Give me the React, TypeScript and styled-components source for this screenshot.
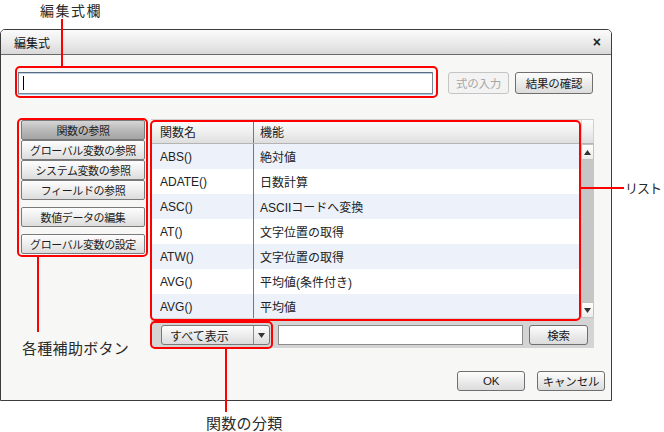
import styled, { createGlobalStyle } from "styled-components";

const GlobalStyle = createGlobalStyle`
  html, body {
    margin: 0;
    padding: 0;
    background: #ffffff;
  }
  body {
    font-family: "Liberation Sans", "Noto Sans CJK JP", sans-serif;
    font-size: 12px;
    color: #222;
  }
`;

const Page = styled.div`
  position: relative;
  width: 664px;
  height: 432px;
  overflow: hidden;
  background: #fff;
`;

const Dialog = styled.div`
  margin-top: 29px;
  width: 612px;
  height: 372px;
  box-sizing: border-box;
  border: 1px solid #3c3c3c;
  border-radius: 5px 5px 0 0;
  background: #f7f8f6;
  display: flex;
  flex-direction: column;
`;

const TitleBar = styled.div`
  height: 24px;
  flex: none;
  display: flex;
  align-items: center;
  justify-content: space-between;
  padding: 0 10px 0 13px;
  border-bottom: 1px solid #6a6a6a;
  border-radius: 4px 4px 0 0;
  background: linear-gradient(#fbfbfb, #e9e9e9 60%, #d9d9d9);
  font-size: 12px;
  color: #111;
`;

const CloseMark = styled.span`
  font-size: 14px;
  font-weight: bold;
  color: #222;
`;

const Body = styled.div`
  flex: 1;
  display: flex;
  flex-direction: column;
  padding: 17px 6px 0 17px;
`;

const ExprRow = styled.div`
  display: flex;
  align-items: center;
  height: 22px;
`;

const ExprInput = styled.div`
  width: 415px;
  height: 22px;
  box-sizing: border-box;
  border: 1px solid #7b8796;
  border-top-color: #5d6b7c;
  box-shadow: inset 0 1px 0 #b9d3ee, 0 1px 0 #a9c6e6;
  background: #fff;
  display: flex;
  align-items: center;
  padding-left: 4px;
`;

const Caret = styled.span`
  width: 1px;
  height: 14px;
  background: #000;
`;

const Button = styled.div<{ $w: number; $disabled?: boolean; $h?: number }>`
  width: ${(p) => p.$w}px;
  height: ${(p) => p.$h ?? 22}px;
  box-sizing: border-box;
  border: 1px solid ${(p) => (p.$disabled ? "#c4c4c4" : "#6f6f6f")};
  border-radius: 3px;
  background: ${(p) =>
    p.$disabled ? "#f3f3f3" : "linear-gradient(#fdfdfd, #ececec 50%, #dcdcdc)"};
  color: ${(p) => (p.$disabled ? "#a6a6a6" : "#1a1a1a")};
  display: flex;
  align-items: center;
  justify-content: center;
  font-size: 11.5px;
  letter-spacing: -0.2px;
  flex: none;
`;

const MainRow = styled.div`
  display: flex;
  margin-top: 25px;
`;

const SideColumn = styled.div`
  width: 124px;
  margin: 1px 0 0 3px;
  display: flex;
  flex-direction: column;
`;

const SideButton = styled.div<{ $active?: boolean; $gap?: number }>`
  height: 20px;
  box-sizing: border-box;
  margin-top: ${(p) => p.$gap ?? 0}px;
  border: 1px solid #7a7a7a;
  border-radius: 2px;
  background: ${(p) =>
    p.$active
      ? "linear-gradient(#d6d6d6, #b9b9b9 50%, #a4a4a4)"
      : "linear-gradient(#fdfdfd, #eeeeee 50%, #dcdcdc)"};
  display: flex;
  align-items: center;
  justify-content: center;
  font-size: 11px;
  letter-spacing: -0.4px;
  white-space: nowrap;
  color: #1e1e1e;
`;

const ListPane = styled.div`
  width: 443px;
  height: 229px;
  margin-left: 6px;
  box-sizing: border-box;
  background: #d4d4d4;
  display: flex;
  flex-direction: column;
  padding-bottom: 3px;
`;

const ListArea = styled.div`
  display: flex;
  height: 199px;
`;

const Table = styled.div`
  width: 430px;
  display: flex;
  flex-direction: column;
  background: #fff;
  overflow: hidden;
`;

const cols = "103px 1fr";

const HeaderRow = styled.div`
  height: 25px;
  flex: none;
  box-sizing: border-box;
  display: grid;
  grid-template-columns: ${cols};
  background: linear-gradient(#fdfdfd, #f0f0f0 50%, #dedede);
  border-bottom: 1px solid #b4b4b4;
  border-top: 1px solid #d0d0d0;
`;

const Cell = styled.div<{ $first?: boolean }>`
  display: flex;
  align-items: center;
  padding-left: ${(p) => (p.$first ? 9 : 6)}px;
  border-right: ${(p) => (p.$first ? "1px solid #777" : "none")};
  white-space: nowrap;
  font-size: 12px;
  color: #222;
`;

const Row = styled.div<{ $alt: boolean }>`
  height: 25px;
  flex: none;
  display: grid;
  grid-template-columns: ${cols};
  background: ${(p) => (p.$alt ? "#edf1f9" : "#ffffff")};
`;

const ScrollBar = styled.div`
  width: 13px;
  display: flex;
  flex-direction: column;
  margin-left: auto;
`;

const ScrollHead = styled.div`
  height: 25px;
  box-sizing: border-box;
  background: linear-gradient(#fdfdfd, #f0f0f0 50%, #dedede);
  border: 1px solid #d0d0d0;
  border-bottom-color: #b4b4b4;
`;

const ScrollArrow = styled.div`
  height: 16px;
  box-sizing: border-box;
  border: 1px solid #c2c2c2;
  background: linear-gradient(#ffffff, #ececec);
  display: flex;
  align-items: center;
  justify-content: center;
`;

const ScrollTrack = styled.div`
  flex: 1;
  background: #c6c6c6;
`;

const ControlRow = styled.div`
  display: flex;
  align-items: center;
  margin-top: 7px;
  padding-left: 10px;
  height: 20px;
`;

const Combo = styled.div`
  width: 109px;
  height: 20px;
  box-sizing: border-box;
  border: 1px solid #777;
  border-radius: 3px;
  background: linear-gradient(#fdfdfd, #ededed 50%, #dcdcdc);
  display: flex;
`;

const ComboText = styled.div`
  flex: 1;
  display: flex;
  align-items: center;
  padding-left: 8px;
  font-size: 12px;
  color: #1e1e1e;
  border-right: 1px solid #8a8a8a;
`;

const ComboArrow = styled.div`
  width: 15px;
  display: flex;
  align-items: center;
  justify-content: center;
`;

const SearchInput = styled.div`
  width: 245px;
  height: 20px;
  box-sizing: border-box;
  margin: 0 6px 0 8px;
  border: 1px solid #8c8c8c;
  background: #fff;
`;

const Footer = styled.div`
  display: flex;
  justify-content: flex-end;
  gap: 12px;
  margin-top: 23px;
`;

/* annotation overlay */
const Callout = styled.div<{ $x: number; $y: number; $w: number; $h: number }>`
  position: absolute;
  left: ${(p) => p.$x}px;
  top: ${(p) => p.$y}px;
  width: ${(p) => p.$w}px;
  height: ${(p) => p.$h}px;
  box-sizing: border-box;
  border: 2px solid #ff0000;
  border-radius: 5px;
  pointer-events: none;
`;

const Leader = styled.div<{ $x: number; $y: number; $w: number; $h: number }>`
  position: absolute;
  left: ${(p) => p.$x}px;
  top: ${(p) => p.$y}px;
  width: ${(p) => p.$w}px;
  height: ${(p) => p.$h}px;
  background: #ff0000;
`;

const Note = styled.div<{ $x: number; $y: number; $size?: number; $spacing?: number }>`
  position: absolute;
  left: ${(p) => p.$x}px;
  top: ${(p) => p.$y}px;
  font-family: "Noto Sans CJK JP", sans-serif;
  font-size: ${(p) => p.$size ?? 15}px;
  line-height: 16px;
  letter-spacing: ${(p) => p.$spacing ?? 0.3}px;
  color: #2a2a2a;
  white-space: nowrap;
`;

const functions: [string, string][] = [
  ["ABS()", "絶対値"],
  ["ADATE()", "日数計算"],
  ["ASC()", "ASCIIコードへ変換"],
  ["AT()", "文字位置の取得"],
  ["ATW()", "文字位置の取得"],
  ["AVG()", "平均値(条件付き)"],
  ["AVG()", "平均値"],
];

const Triangle = ({ up }: { up?: boolean }) => (
  <svg width="7" height="5" viewBox="0 0 7 5">
    <path d={up ? "M0 5 L3.5 0 L7 5 Z" : "M0 0 L7 0 L3.5 5 Z"} fill="#333" />
  </svg>
);

export default function App() {
  return (
    <Page>
      <GlobalStyle />
      <Dialog>
        <TitleBar>
          <span>編集式</span>
          <CloseMark>×</CloseMark>
        </TitleBar>
        <Body>
          <ExprRow>
            <ExprInput>
              <Caret />
            </ExprInput>
            <Button $w={61} $disabled style={{ marginLeft: 15 }}>
              式の入力
            </Button>
            <Button $w={78} style={{ marginLeft: 6 }}>
              結果の確認
            </Button>
          </ExprRow>
          <MainRow>
            <SideColumn>
              <SideButton $active>関数の参照</SideButton>
              <SideButton>グローバル変数の参照</SideButton>
              <SideButton>システム変数の参照</SideButton>
              <SideButton>フィールドの参照</SideButton>
              <SideButton $gap={7}>数値データの編集</SideButton>
              <SideButton $gap={7}>グローバル変数の設定</SideButton>
            </SideColumn>
            <ListPane>
              <ListArea>
                <Table>
                  <HeaderRow>
                    <Cell $first>関数名</Cell>
                    <Cell>機能</Cell>
                  </HeaderRow>
                  {functions.map(([name, desc], i) => (
                    <Row key={i} $alt={i % 2 === 0}>
                      <Cell $first>{name}</Cell>
                      <Cell>{desc}</Cell>
                    </Row>
                  ))}
                </Table>
                <ScrollBar>
                  <ScrollHead />
                  <ScrollArrow>
                    <Triangle up />
                  </ScrollArrow>
                  <ScrollTrack />
                  <ScrollArrow>
                    <Triangle />
                  </ScrollArrow>
                </ScrollBar>
              </ListArea>
              <ControlRow>
                <Combo>
                  <ComboText>すべて表示</ComboText>
                  <ComboArrow>
                    <Triangle />
                  </ComboArrow>
                </Combo>
                <SearchInput />
                <Button $w={59} $h={20}>
                  検索
                </Button>
              </ControlRow>
            </ListPane>
          </MainRow>
          <Footer>
            <Button $w={68} $h={20}>
              OK
            </Button>
            <Button $w={68} $h={20}>
              キャンセル
            </Button>
          </Footer>
        </Body>
      </Dialog>

      <Callout $x={15} $y={66} $w={423} $h={32} />
      <Leader $x={61} $y={19} $w={2} $h={47} />
      <Note $x={40} $y={2} $size={14} $spacing={1.5}>編集式欄</Note>

      <Callout $x={17} $y={118} $w={131} $h={139} />
      <Leader $x={37} $y={257} $w={2} $h={75} />
      <Note $x={22} $y={340}>各種補助ボタン</Note>

      <Callout $x={150} $y={120} $w={431} $h={201} />
      <Leader $x={581} $y={187} $w={43} $h={2} />
      <Note $x={625} $y={180} $size={13} $spacing={-1}>リスト</Note>

      <Callout $x={150} $y={321} $w={123} $h={28} />
      <Leader $x={225} $y={349} $w={2} $h={63} />
      <Note $x={206} $y={415}>関数の分類</Note>
    </Page>
  );
}
